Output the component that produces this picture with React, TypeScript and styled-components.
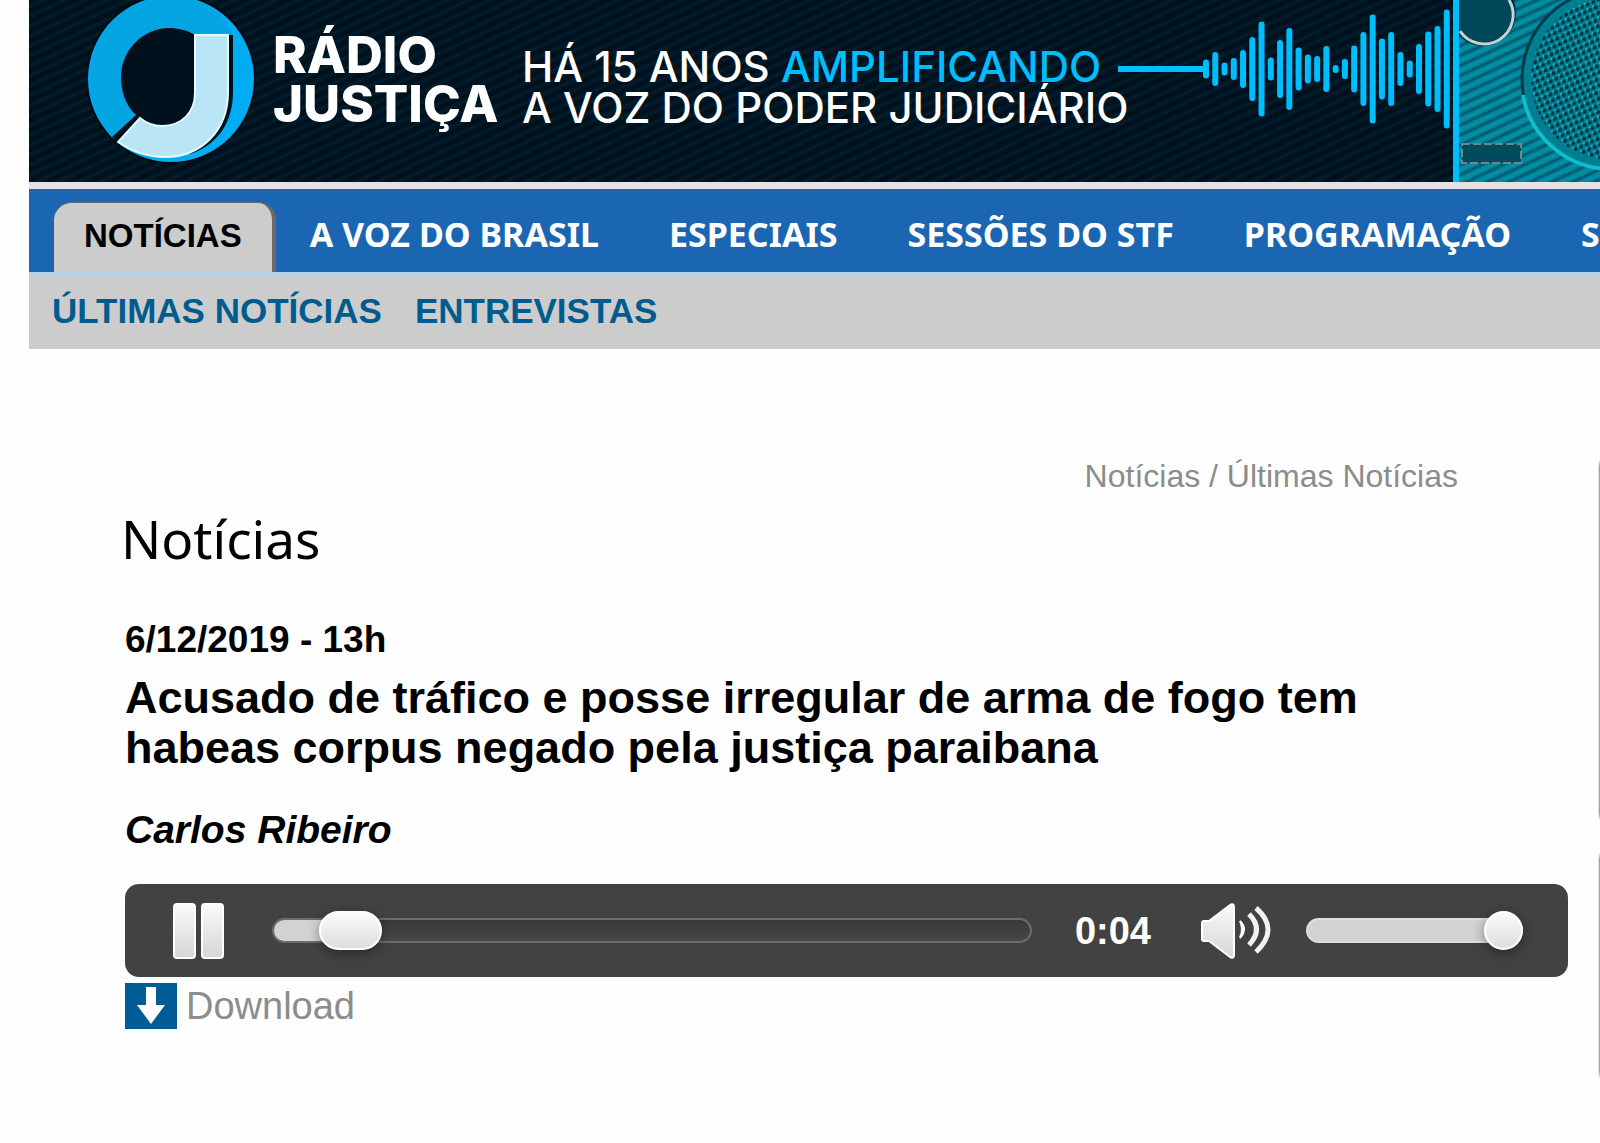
import React, { useState } from 'react';
import styled, { createGlobalStyle } from 'styled-components';

const sans = '"Liberation Sans", Arial, sans-serif';
const humanist = '"Noto Sans", "Open Sans", sans-serif';
const geometric = 'Inter, "Open Sans", sans-serif';

const GlobalStyle = createGlobalStyle`
  *, *::before, *::after { box-sizing: border-box; }
  body { margin: 0; background: #fefefe; color: #000; font-family: ${sans}; }
  h1, h2, p { margin: 0; }
  a { color: inherit; text-decoration: none; }
`;

const Page = styled.div`
  overflow: hidden;
`;

const Header = styled.header`
  margin-left: 29px;
`;

const Banner = styled.div`
  display: grid;
  grid-template-columns: 186px 249px 593px 338px 1fr;
  height: 182px;
  padding-left: 58px;
  overflow: hidden;
  white-space: nowrap;
  font-family: ${geometric};
  background: repeating-linear-gradient(155deg, #00111d 0 3px, #021f2f 6px, #00111d 9px);

  svg { display: block; }
`;

const Brand = styled.p`
  padding-top: 30px;
  font-size: 51px;
  line-height: 49px;
  font-weight: 800;
  color: #fff;
`;

const Tagline = styled.p`
  padding-top: 46px;
  font-size: 42px;
  line-height: 41px;
  font-weight: 500;
  color: #fff;

  em { font-style: normal; color: #00bdfc; }
`;

const Radio = styled.div`
  border-left: 6px solid #00bdfc;
  overflow: hidden;
  background: repeating-linear-gradient(155deg, #008ea4 0 3px, #005567 6px, #008ea4 9px);
`;

const Nav = styled.nav`
  display: flex;
  align-items: baseline;
  height: 94px;
  padding: 13px 0 0 25px;
  border-top: 7px solid #e6dfe3;
  border-bottom: 4px solid #b3d4ee;
  background: #1a66b2;
  overflow: hidden;
  white-space: nowrap;
`;

const NavLink = styled.a`
  padding: 0 36px 0 34px;
  font-family: ${humanist};
  font-size: 34px;
  line-height: 40px;
  font-weight: 700;
  color: #fff;
`;

const NavTab = styled(NavLink)`
  padding: 13px 30px 16px;
  border-right: 4px solid #6e6a68;
  border-top: 1px solid #6e6a68;
  border-radius: 18px 18px 0 0;
  background: #ccc;
  font-family: ${sans};
  font-size: 33px;
  color: #000;
`;

const SubNav = styled.nav`
  display: flex;
  gap: 33px;
  padding: 15px 23px 18px;
  background: #ccc;
  font-size: 35px;
  line-height: 40px;
  font-weight: 700;
  color: #005c8f;
`;

const Body = styled.div`
  display: flex;
  gap: 31px;
  padding-left: 125px;
`;

const Main = styled.main`
  flex: 1;
  min-width: 0;
  padding-top: 107px;
`;

const Breadcrumb = styled.nav`
  padding-right: 110px;
  text-align: right;
  font-size: 32px;
  line-height: 40px;
  color: #8c8c8c;
`;

const Title = styled.h1`
  margin: 13px 0 0 -4px;
  font-family: ${humanist};
  font-size: 53px;
  line-height: 60px;
  font-weight: 400;
`;

const Stamp = styled.p`
  margin-top: 51px;
  font-size: 37px;
  line-height: 40px;
  font-weight: 700;
`;

const Headline = styled.h2`
  max-width: 1320px;
  margin-top: 13px;
  font-size: 45px;
  line-height: 50px;
  font-weight: 700;
`;

const Author = styled.p`
  margin-top: 37px;
  font-size: 39px;
  line-height: 40px;
  font-weight: 700;
  font-style: italic;
`;

const Player = styled.div`
  display: flex;
  align-items: center;
  height: 93px;
  margin-top: 34px;
  padding: 0 45px 0 48px;
  border-radius: 14px;
  background: #424242;
`;

const IconButton = styled.button<{ $gap: number }>`
  flex: none;
  display: block;
  margin: 0 ${p => p.$gap}px 0 0;
  padding: 0;
  border: 0;
  background: none;
  cursor: pointer;

  svg { display: block; }
`;

const Range = styled.input<{ $thumb: number; $fill: number }>`
  appearance: none;
  height: 25px;
  margin: 0;
  border: 2px solid #6c6c6c;
  border-radius: 13px;
  background:
    linear-gradient(90deg, #d2d2d2 ${p => p.$fill}%, transparent ${p => p.$fill}%) border-box,
    linear-gradient(#383838, #484848);
  cursor: pointer;

  &::-webkit-slider-runnable-track { margin: 0 -2px; }

  &::-webkit-slider-thumb {
    appearance: none;
    width: ${p => p.$thumb}px;
    height: 39px;
    border: 2px solid #fff;
    border-radius: 20px;
    background: linear-gradient(#fafafa, #dedede);
    box-shadow: 0 3px 12px rgba(0, 0, 0, 0.4);
  }
`;

const Seek = styled(Range)`
  flex: 1;
  min-width: 0;
  margin-right: 43px;
`;

const Volume = styled(Range)`
  flex: none;
  width: 217px;
  border-color: #dedede;
`;

const Time = styled.time`
  margin-right: 50px;
  font-size: 38px;
  line-height: 40px;
  font-weight: 700;
  color: #fff;
`;

const Download = styled.a`
  display: inline-flex;
  align-items: center;
  gap: 9px;
  margin-top: 6px;
  font-size: 38px;
  line-height: 46px;
  color: #8c8c8c;

  svg { display: block; }
`;

const Sidebar = styled.aside`
  flex: 0 0 1px;
  min-width: 0;
  padding-top: 103px;
`;

const SideBox = styled.div<{ $height: number }>`
  width: 400px;
  height: ${p => p.$height}px;
  margin-bottom: 17px;
  border: 1px solid #7fa9cc;
  border-radius: 14px;
  box-shadow: -1px 0 #dbe9f4;
`;

const bars = [19, 34, 13, 22, 38, 64, 95, 23, 58, 82, 43, 29, 26, 46, 8, 20, 47, 74, 109, 61, 74, 34, 17, 50, 75, 86, 119];

const Logo = () => (
  <svg width="168" height="182" viewBox="87 0 168 182" aria-hidden="true">
    <circle cx="171" cy="79" r="85" fill="#000a12" />
    <circle cx="171" cy="79" r="83" fill="#00adf3" />
    <path d="M171-4A83 83 0 0 0 113 137L142 108L195 93V35H233C222 10 198-4 171-4Z" fill="#05a5e4" />
    <path d="M195 35C187 30 178 28 169 28A49 49 0 0 0 121 77C121 92 126 106 136 115L112 137L118 144L190 154C218 145 233 122 233 92V35Z" fill="#00111d" />
    <path d="M195 35H228V92C228 132 200 157 165 157C147 157 131 151 118 142L140 118C146 123 154 126 162 126C182 126 195 112 195 93Z" fill="#b9e5f6" stroke="#e4fbff" strokeWidth="2" />
  </svg>
);

const Wave = () => (
  <svg width="338" height="182" viewBox="1115 0 338 182" aria-hidden="true">
    <g stroke="#00bdfc" strokeWidth="6" fill="none">
      <path d="M1118 69H1206" />
      <g strokeLinecap="round">
        {bars.map((h, i) => {
          const half = (h - 6) / 2;
          const x = 1206 + i * 9.26;
          return <path key={i} d={`M${x} ${69 - half}V${69 + half}`} />;
        })}
      </g>
    </g>
  </svg>
);

const RadioSet = () => (
  <svg width="300" height="182" viewBox="1459 0 300 182" aria-hidden="true">
    <defs>
      <pattern id="mesh" width="6" height="6" patternUnits="userSpaceOnUse" patternTransform="rotate(-25)">
        <rect width="6" height="6" fill="#007f92" />
        <circle cx="3" cy="3" r="2" fill="#00303e" />
        <rect width="2" height="2" fill="#12b9cc" />
      </pattern>
    </defs>
    <circle cx="1483" cy="13" r="31" fill="#00475a" stroke="#002b38" strokeWidth="4" />
    <path d="M1460 31A29 29 0 0 0 1509 0" fill="none" stroke="#c3d2d5" strokeWidth="3" />
    <circle cx="1612" cy="79" r="90" fill="#007f92" stroke="#003b48" strokeWidth="3" />
    <circle cx="1612" cy="79" r="81" fill="url(#mesh)" />
    <path d="M1523 95A90 90 0 0 0 1612 169" fill="none" stroke="#12bccf" strokeWidth="4" />
    <rect x="1462" y="144" width="59" height="19" fill="#004c5e" stroke="#71858c" strokeWidth="2" strokeDasharray="8 3" />
  </svg>
);

const PauseIcon = () => (
  <svg width="52" height="56" viewBox="0 0 52 56" aria-hidden="true">
    <defs>
      <linearGradient id="metal" x2="0" y2="1">
        <stop stopColor="#fafafa" />
        <stop offset="1" stopColor="#d6d6d6" />
      </linearGradient>
    </defs>
    <g fill="url(#metal)" stroke="#fff" strokeWidth="2">
      <rect x="1" y="1" width="21" height="54" rx="3" />
      <rect x="29" y="1" width="21" height="54" rx="3" />
    </g>
  </svg>
);

const SpeakerIcon = () => (
  <svg width="70" height="56" viewBox="0 0 70 56" aria-hidden="true">
    <path d="M3 18H8L29 2Q33 0 33 4V52Q33 56 29 54L8 38H3Q1 38 1 36V20Q1 18 3 18Z" fill="url(#metal)" stroke="#fff" strokeWidth="2" />
    <path d="M39 18Q47 26 39 35Q43 26 39 18Z" fill="#fff" stroke="#fff" strokeWidth="2" />
    <g fill="none" stroke="#f2f2f2" strokeWidth="5">
      <path d="M48 11Q63 26 48 42" />
      <path d="M55 5Q79 26 55 49" />
    </g>
  </svg>
);

const DownloadIcon = () => (
  <svg width="52" height="46" viewBox="0 0 52 46" aria-hidden="true">
    <rect width="52" height="46" fill="#005c94" />
    <path d="M21 4H31V22H40L26 41L12 22H21Z" fill="#fff" />
  </svg>
);

export default function App() {
  const [position, setPosition] = useState(4);
  const [volume, setVolume] = useState(100);

  return (
    <Page>
      <GlobalStyle />
      <Header>
        <Banner>
          <Logo />
          <Brand>RÁDIO<br />JUSTIÇA</Brand>
          <Tagline>HÁ 15 ANOS <em>AMPLIFICANDO</em><br />A VOZ DO PODER JUDICIÁRIO</Tagline>
          <Wave />
          <Radio><RadioSet /></Radio>
        </Banner>
        <Nav>
          <NavTab href="#noticias">NOTÍCIAS</NavTab>
          <NavLink href="#voz">A VOZ DO BRASIL</NavLink>
          <NavLink href="#especiais">ESPECIAIS</NavLink>
          <NavLink href="#sessoes">SESSÕES DO STF</NavLink>
          <NavLink href="#programacao">PROGRAMAÇÃO</NavLink>
          <NavLink href="#s">S</NavLink>
        </Nav>
        <SubNav>
          <a href="#ultimas">ÚLTIMAS NOTÍCIAS</a>
          <a href="#entrevistas">ENTREVISTAS</a>
        </SubNav>
      </Header>
      <Body>
        <Main>
          <Breadcrumb>
            <a href="#noticias">Notícias</a> / <a href="#ultimas">Últimas Notícias</a>
          </Breadcrumb>
          <Title>Notícias</Title>
          <Stamp>6/12/2019 - 13h</Stamp>
          <Headline>Acusado de tráfico e posse irregular de arma de fogo tem habeas corpus negado pela justiça paraibana</Headline>
          <Author>Carlos Ribeiro</Author>
          <Player>
            <IconButton type="button" aria-label="Pausar" $gap={47}><PauseIcon /></IconButton>
            <Seek type="range" aria-label="Posição" min={0} max={59} value={position} $thumb={63}
              $fill={position / 59 * 92 + 4} onChange={e => setPosition(Number(e.target.value))} />
            <Time>0:{String(position).padStart(2, '0')}</Time>
            <IconButton type="button" aria-label="Silenciar" $gap={35}><SpeakerIcon /></IconButton>
            <Volume type="range" aria-label="Volume" min={0} max={100} value={volume} $thumb={39}
              $fill={volume} onChange={e => setVolume(Number(e.target.value))} />
          </Player>
          <Download href="#download"><DownloadIcon />Download</Download>
        </Main>
        <Sidebar>
          <SideBox $height={376} />
          <SideBox $height={241} />
        </Sidebar>
      </Body>
    </Page>
  );
}
